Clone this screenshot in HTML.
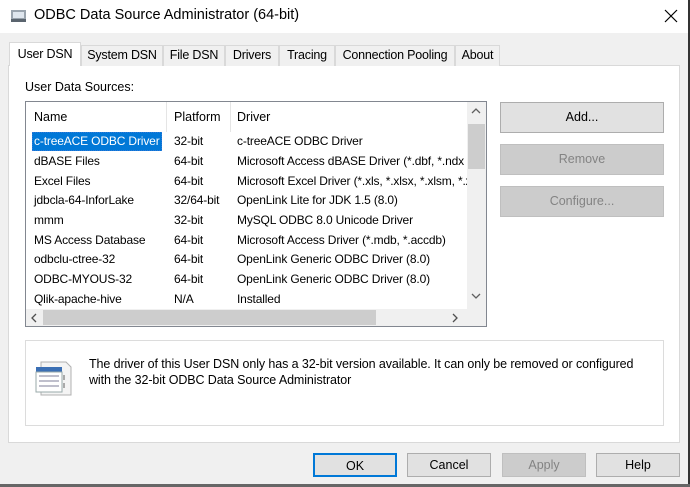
<!DOCTYPE html>
<html><head><style>
*{margin:0;padding:0;box-sizing:border-box}
body{width:690px;height:487px;background:#f0f0f0;font-family:"Liberation Sans",sans-serif;font-size:12px;color:#000;position:relative;overflow:hidden}
.a{position:absolute}
.title{left:0;top:0;width:688px;height:33px;background:#fff}
.tab{position:absolute;top:45px;height:21px;border:1px solid #d9d9d9;border-bottom:none;background:#f0f0f0;text-align:center;line-height:19px;font-size:12.5px;letter-spacing:-0.2px}
.panel{left:8px;top:65px;width:672px;height:378px;background:#fff;border:1px solid #d9d9d9}
.btn{position:absolute;background:#e1e1e1;border:1px solid #adadad;text-align:center;font-size:12.5px}
.dis{background:#cccccc;border-color:#bfbfbf;color:#838383}
.row{position:absolute;left:0;height:20px;line-height:19px;white-space:nowrap;font-size:12px;letter-spacing:-0.15px}
.row span{position:absolute}
</style></head><body>
<div class="a title"></div>
<svg class="a" style="left:10px;top:7px" width="18" height="18" viewBox="0 0 18 18"><rect x="1" y="3" width="15" height="11" fill="#9aa4ae"/><rect x="3" y="5" width="11" height="6" fill="#dfe6ee"/><rect x="1" y="12" width="15" height="3" fill="#5a646e"/></svg>
<div class="a" style="left:34px;top:7px;font-size:14.5px">ODBC Data Source Administrator (64-bit)</div>
<svg class="a" style="left:664px;top:9px" width="14" height="14" viewBox="0 0 14 14"><path d="M1 1L13 13M13 1L1 13" stroke="#000" stroke-width="1.2"/></svg>
<div class="a" style="left:688px;top:0;width:2px;height:487px;background:#333"></div>
<div class="a" style="left:0;top:484px;width:690px;height:3px;background:#666"></div>
<div class="a panel"></div>
<div class="tab" style="left:81px;width:82px">System DSN</div>
<div class="tab" style="left:163px;width:62px">File DSN</div>
<div class="tab" style="left:225px;width:54px">Drivers</div>
<div class="tab" style="left:279px;width:56px">Tracing</div>
<div class="tab" style="left:335px;width:120px">Connection Pooling</div>
<div class="tab" style="left:455px;width:45px">About</div>
<div class="tab" style="left:9px;top:42px;width:72px;height:24px;background:#fff;line-height:22px">User DSN</div>
<div class="a" style="left:25px;top:80px;font-size:12.5px">User Data Sources:</div>
<div class="a" style="left:25px;top:101px;width:462px;height:226px;border:1px solid #828790;background:#fff;overflow:hidden">
 <div class="a" style="left:0;top:0;width:441px;height:30px;font-size:12.5px">
  <span class="a" style="left:8px;top:8px">Name</span>
  <div class="a" style="left:140px;top:0;width:1px;height:30px;background:#e5e5e5"></div>
  <span class="a" style="left:148px;top:8px">Platform</span>
  <div class="a" style="left:204px;top:0;width:1px;height:30px;background:#e5e5e5"></div>
  <span class="a" style="left:211px;top:8px">Driver</span>
 </div>
 <div class="a" style="left:0;top:30px;width:441px;height:178px;overflow:hidden">
  <div class="row" style="top:0"><span style="left:6px;border:1px dotted #3078d8;padding:0 1px;background:#0078d7;color:#fff;top:0;line-height:17px">c-treeACE ODBC Driver</span><span style="left:148px">32-bit</span><span style="left:211px">c-treeACE ODBC Driver</span></div>
  <div class="row" style="top:20px"><span style="left:8px">dBASE Files</span><span style="left:148px">64-bit</span><span style="left:211px">Microsoft Access dBASE Driver (*.dbf, *.ndx</span></div>
  <div class="row" style="top:40px"><span style="left:8px">Excel Files</span><span style="left:148px">64-bit</span><span style="left:211px">Microsoft Excel Driver (*.xls, *.xlsx, *.xlsm, *.xlsb)</span></div>
  <div class="row" style="top:59px"><span style="left:8px">jdbcla-64-InforLake</span><span style="left:148px">32/64-bit</span><span style="left:211px">OpenLink Lite for JDK 1.5 (8.0)</span></div>
  <div class="row" style="top:79px"><span style="left:8px">mmm</span><span style="left:148px">32-bit</span><span style="left:211px">MySQL ODBC 8.0 Unicode Driver</span></div>
  <div class="row" style="top:99px"><span style="left:8px">MS Access Database</span><span style="left:148px">64-bit</span><span style="left:211px">Microsoft Access Driver (*.mdb, *.accdb)</span></div>
  <div class="row" style="top:118px"><span style="left:8px">odbclu-ctree-32</span><span style="left:148px">64-bit</span><span style="left:211px">OpenLink Generic ODBC Driver (8.0)</span></div>
  <div class="row" style="top:138px"><span style="left:8px">ODBC-MYOUS-32</span><span style="left:148px">64-bit</span><span style="left:211px">OpenLink Generic ODBC Driver (8.0)</span></div>
  <div class="row" style="top:158px"><span style="left:8px">Qlik-apache-hive</span><span style="left:148px">N/A</span><span style="left:211px">Installed</span></div>
 </div>
 <div class="a" style="left:441px;top:0;width:19px;height:207px;background:#f0f0f0"></div>
 <div class="a" style="left:442px;top:22px;width:17px;height:45px;background:#cdcdcd"></div>
 <svg class="a" style="left:445px;top:6px" width="10" height="6"><path d="M1 5L5 1L9 5" stroke="#606060" stroke-width="1.3" fill="none"/></svg>
 <svg class="a" style="left:445px;top:191px" width="10" height="6"><path d="M1 1L5 5L9 1" stroke="#606060" stroke-width="1.3" fill="none"/></svg>
 <div class="a" style="left:0;top:207px;width:460px;height:17px;background:#f0f0f0"></div>
 <div class="a" style="left:17px;top:208px;width:333px;height:15px;background:#cdcdcd"></div>
 <svg class="a" style="left:5px;top:211px" width="6" height="10"><path d="M5 1L1 5L5 9" stroke="#505050" stroke-width="1.3" fill="none"/></svg>
 <svg class="a" style="left:426px;top:211px" width="6" height="10"><path d="M1 1L5 5L1 9" stroke="#505050" stroke-width="1.3" fill="none"/></svg>
 <div class="a" style="left:441px;top:207px;width:19px;height:17px;background:#f0f0f0"></div>
</div>
<div class="btn" style="left:500px;top:102px;width:164px;height:31px;line-height:29px">Add...</div>
<div class="btn dis" style="left:500px;top:144px;width:164px;height:31px;line-height:29px">Remove</div>
<div class="btn dis" style="left:500px;top:186px;width:164px;height:31px;line-height:29px">Configure...</div>
<div class="a" style="left:25px;top:340px;width:639px;height:86px;border:1px solid #dcdcdc;background:#fff"></div>
<svg class="a" style="left:35px;top:359px" width="38" height="38" viewBox="0 0 38 38"><path d="M6 3H31L36 8V36H6Z" fill="#f4f4f4" stroke="#b0b0b0"/><rect x="1" y="8" width="26" height="5" fill="#3b6fb4"/><rect x="1" y="13" width="26" height="20" fill="#fff" stroke="#9aa"/><g stroke="#aab" stroke-width="1.5"><path d="M4 17H24M4 22H24M4 27H24"/></g><path d="M29 16v5M29 24v5" stroke="#aaa" stroke-width="2"/></svg>
<div class="a" style="left:89px;top:356px;font-size:12.5px;line-height:16px;width:555px;letter-spacing:-0.1px">The driver of this User DSN only has a 32-bit version available. It can only be removed or configured with the 32-bit ODBC Data Source Administrator</div>
<div class="btn" style="left:313px;top:453px;width:84px;height:24px;line-height:22px;border:2px solid #0078d7">OK</div>
<div class="btn" style="left:407px;top:453px;width:84px;height:24px;line-height:22px">Cancel</div>
<div class="btn dis" style="left:502px;top:453px;width:84px;height:24px;line-height:22px">Apply</div>
<div class="btn" style="left:596px;top:453px;width:84px;height:24px;line-height:22px">Help</div>
</body></html>
